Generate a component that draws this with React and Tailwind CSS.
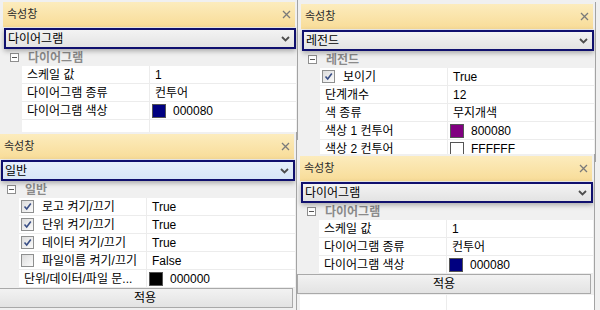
import React from 'react';

const CloseIcon = () => (
    <svg width="9" height="9" viewBox="0 0 9 9">
        <path d="M1 1L8 8M8 1L1 8" stroke="#7a7a7a" strokeWidth="1.3" />
    </svg>
);

const Chevron = () => (
    <svg width="9" height="6" viewBox="0 0 9 6">
        <path d="M1 1L4.5 4.5L8 1" stroke="#4d4d4d" strokeWidth="1.8" fill="none" />
    </svg>
);

const MinusBox = () => (
    <div className="w-[9px] h-[9px] border border-[#8e8e8e] bg-white flex items-center justify-center">
        <div className="w-[5px] h-px bg-[#555]" />
    </div>
);

const Checkbox = ({ checked }) => (
    <div className="w-[13px] h-[13px] shrink-0 border border-[#8e8f8f] bg-gradient-to-br from-[#dcdcdc] to-[#fbfbfb] flex items-center justify-center">
        {checked && (
            <svg width="9" height="9" viewBox="0 0 9 9">
                <path d="M1.5 4.5L3.7 7L7.8 1.5" stroke="#3a4f86" strokeWidth="1.6" fill="none" />
            </svg>
        )}
    </div>
);

const Row = ({ label, value, check, swatch }) => (
    <div className="flex h-[18px] border-b border-[#ececec]">
        <div className="w-[127px] shrink-0 bg-white flex items-center gap-[8px] pl-[2px] text-[12px] text-black whitespace-nowrap overflow-hidden">
            {check !== undefined && <Checkbox checked={check} />}
            <span className={check !== undefined ? '' : 'pl-[3px]'}>{label}</span>
        </div>
        <div className="w-px bg-[#ececec]" />
        <div className="flex-1 bg-white flex items-center gap-[7px] pl-[2px] text-[12px] text-black whitespace-nowrap">
            {swatch && <div className="w-[14px] h-[14px] border border-[#555]" style={{ background: swatch }} />}
            <span className={swatch ? '' : 'pl-[3px]'}>{value}</span>
        </div>
    </div>
);

const Panel = ({ className, combo, focused, group, rows, button, after }) => (
    <div className={`absolute overflow-hidden bg-[#f0f0f0] border-r border-[#a3a3a3] pt-[2px] ${className}`}>
        <div className="ml-[3px] mr-[2px] h-[25px] bg-gradient-to-b from-[#fcecbd] to-[#f8dc98] flex items-center justify-between pl-[4px] pr-[4px]">
            <span className="text-[11px] text-[#2b2b2b]">속성창</span>
            <CloseIcon />
        </div>
        <div className={`relative z-10 ml-[4px] mr-[1px] mt-[1px] h-[21px] border-2 border-[#10106e] shadow-[0_2px_5px_rgba(0,0,0,0.3)] flex items-center justify-between pl-[2px] pr-[4px] ${focused ? 'bg-gradient-to-b from-[#e6f0fb] to-[#d8e6f7]' : 'bg-gradient-to-b from-[#f3f3f3] to-[#e3e3e3]'}`}>
            <span className="text-[12px] text-black">{combo}</span>
            <Chevron />
        </div>
        <div className="h-[17px] flex items-center pl-[10px] gap-[9px]">
            <MinusBox />
            <span className="text-[12px] font-semibold text-[#8a8a8a]">{group}</span>
        </div>
        <div className="ml-[22px] mr-[1px]">
            {rows.map((r, i) => <Row key={i} {...r} />)}
        </div>
        {button && (
            <button className="block w-[calc(100%-3px)] h-[20px] border border-[#a9a9a9] bg-gradient-to-b from-[#f2f2f2] to-[#e3e3e3] text-[12px] text-black">
                적용
            </button>
        )}
        {after}
    </div>
);

const diagramRows = [
    { label: '스케일 값', value: '1' },
    { label: '다이어그램 종류', value: '컨투어' },
    { label: '다이어그램 색상', value: '000080', swatch: '#000080' },
];

export default function App() {
    return (
        <div className="relative w-[600px] h-[310px] overflow-hidden bg-[#f0f0f0] font-['Liberation_Sans','Noto_Sans_CJK_KR',sans-serif]">
            <Panel className="left-0 top-0 w-[298px] h-[140px]" combo="다이어그램" group="다이어그램"
                rows={[...diagramRows, { label: '', value: '' }]} />
            <Panel className="left-[298px] top-[2px] w-[298px] h-[160px]" combo="레전드" group="레전드"
                rows={[
                    { label: '보이기', value: 'True', check: true },
                    { label: '단계개수', value: '12' },
                    { label: '색 종류', value: '무지개색' },
                    { label: '색상 1 컨투어', value: '800080', swatch: '#800080' },
                    { label: '색상 2 컨투어', value: 'FFFFFF', swatch: '#ffffff' },
                ]} />
            <Panel className="left-[-3px] top-[132px] w-[300px] h-[180px]" combo="일반" group="일반" focused button
                rows={[
                    { label: '로고 켜기/끄기', value: 'True', check: true },
                    { label: '단위 켜기/끄기', value: 'True', check: true },
                    { label: '데이터 켜기/끄기', value: 'True', check: true },
                    { label: '파일이름 켜기/끄기', value: 'False', check: false },
                    { label: '단위/데이터/파일 문...', value: '000000', swatch: '#000000' },
                ]} />
            <Panel className="left-[297px] top-[154px] w-[298px] h-[160px]" combo="다이어그램" group="다이어그램" button
                rows={diagramRows}
                after={
                    <div className="ml-[3px] mt-[1px] flex h-[18px]">
                        <div className="w-[146px] bg-white" />
                        <div className="w-px bg-[#ececec]" />
                        <div className="flex-1 bg-white" />
                    </div>
                } />
        </div>
    );
}
